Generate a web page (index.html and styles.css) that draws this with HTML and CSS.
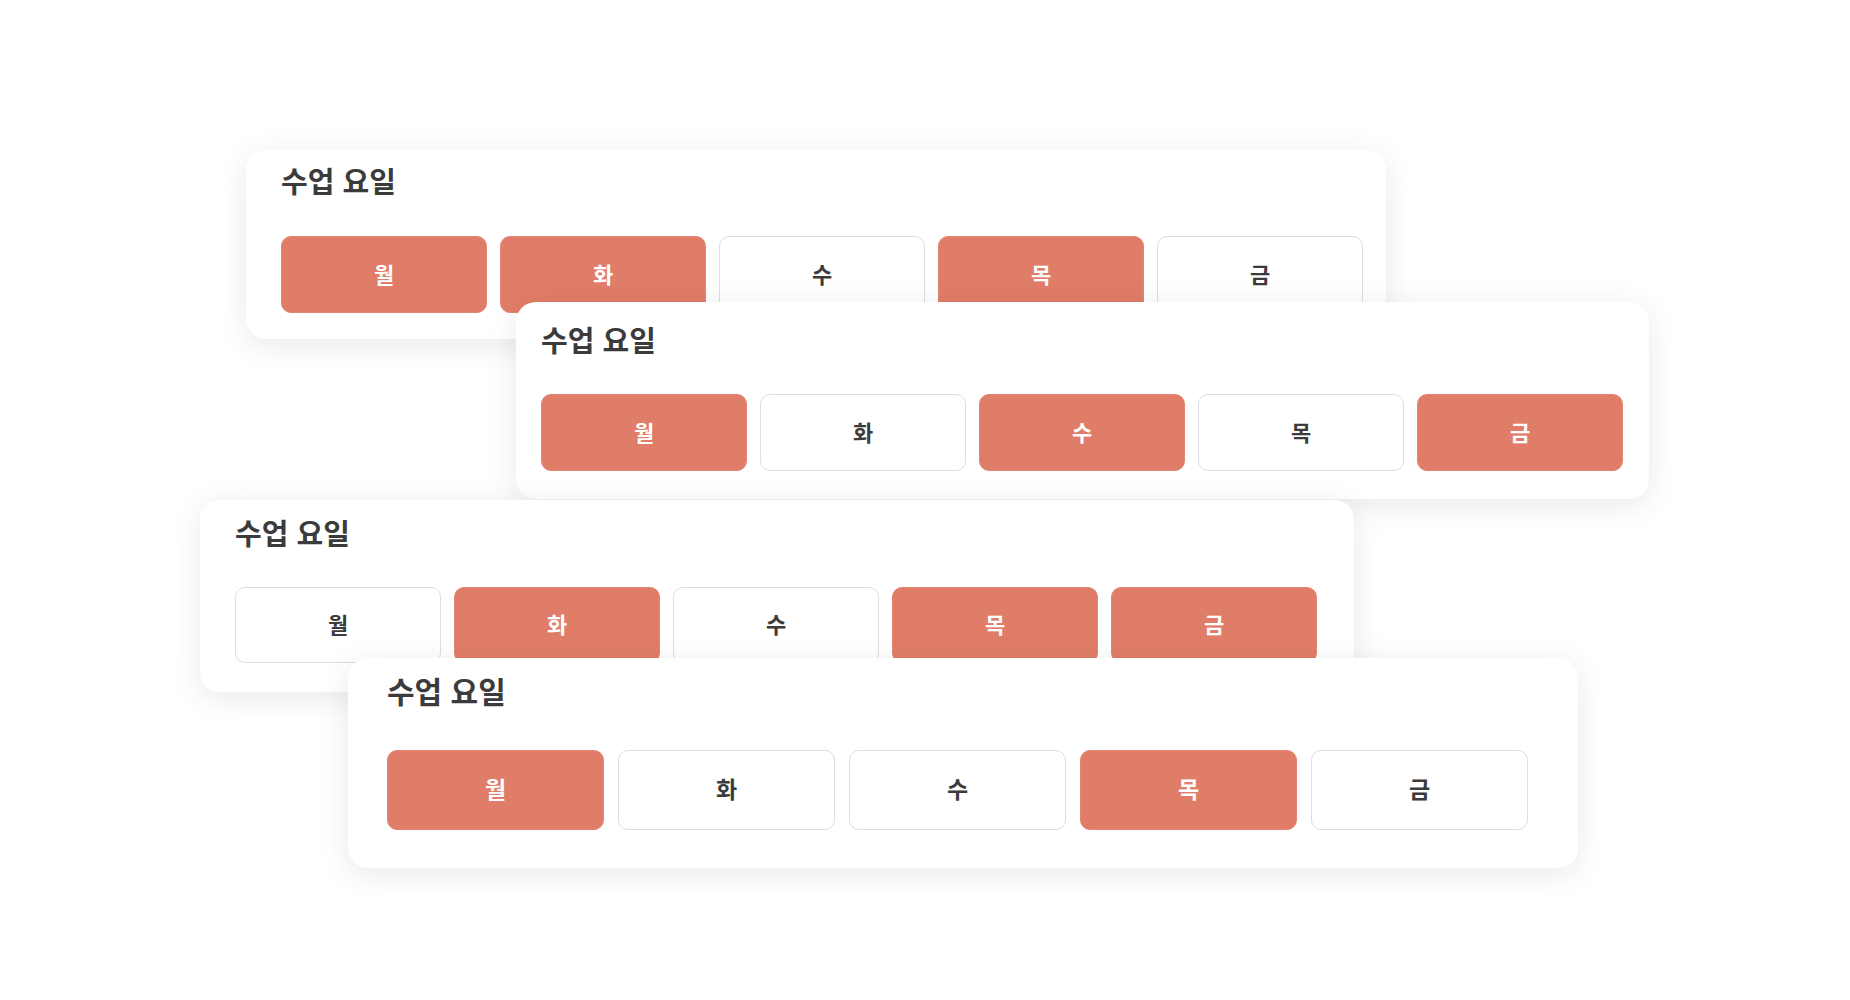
FILE: index.html
```html
<!DOCTYPE html>
<html lang="ko">
<head>
<meta charset="utf-8">
<title>수업 요일</title>
<link rel="stylesheet" href="styles.css">
</head>
<body>
<div class="stack">
  <section class="card card-a">
    <h2 class="title">수업 요일</h2>
    <div class="days">
      <button class="day on">월</button>
      <button class="day on">화</button>
      <button class="day">수</button>
      <button class="day on">목</button>
      <button class="day">금</button>
    </div>
  </section>
  <section class="card card-b">
    <h2 class="title">수업 요일</h2>
    <div class="days">
      <button class="day on">월</button>
      <button class="day">화</button>
      <button class="day on">수</button>
      <button class="day">목</button>
      <button class="day on">금</button>
    </div>
  </section>
  <section class="card card-c">
    <h2 class="title">수업 요일</h2>
    <div class="days">
      <button class="day">월</button>
      <button class="day on">화</button>
      <button class="day">수</button>
      <button class="day on">목</button>
      <button class="day on">금</button>
    </div>
  </section>
  <section class="card card-d">
    <h2 class="title">수업 요일</h2>
    <div class="days">
      <button class="day on">월</button>
      <button class="day">화</button>
      <button class="day">수</button>
      <button class="day on">목</button>
      <button class="day">금</button>
    </div>
  </section>
</div>
</body>
</html>
```

FILE: styles.css
```css
* { box-sizing: border-box; }
html, body {
  margin: 0;
  background: #ffffff;
  font-family: "Noto Sans CJK KR", "Noto Sans", sans-serif;
  color: #3b3b3b;
}
.stack {
  display: flex;
  flex-direction: column;
  align-items: flex-start;
  padding-top: 150px;
  padding-bottom: 132px;
  min-height: 1000px;
}
.card {
  position: relative;
  background: #ffffff;
  border-radius: 20px;
  box-shadow: 0 6px 32px rgba(0, 0, 0, 0.09);
  padding: var(--pt) 0 var(--pb) var(--pl);
  margin-left: var(--left);
  width: var(--w);
}
.title {
  margin: 0;
  font-size: var(--tfs);
  line-height: var(--tlh);
  font-weight: 700;
  color: #3b3b3b;
}
.days {
  display: flex;
  gap: var(--bg);
  margin-top: var(--gap);
}
.day {
  width: var(--bw);
  height: var(--bh);
  border-radius: 10px;
  border: 1px solid #dddddd;
  background: #ffffff;
  font-family: inherit;
  font-size: var(--bfs);
  font-weight: 700;
  color: #3b3b3b;
  padding: 0 0 4px 0;
  display: flex;
  align-items: center;
  justify-content: center;
}
.day.on {
  background: #e07d68;
  border-color: #e48571;
  color: #ffffff;
}
.card-a {
  --left: 246px; --w: 1140px; --pl: 35px; --pt: 11px; --pb: 26px;
  --tfs: 29px; --tlh: 38px; --gap: 37px;
  --bw: 206px; --bh: 77px; --bg: 13px; --bfs: 22px;
}
.card-b {
  --left: 516px; --w: 1133px; --pl: 25px; --pt: 18px; --pb: 28px;
  --tfs: 29px; --tlh: 38px; --gap: 36px;
  --bw: 206px; --bh: 77px; --bg: 13px; --bfs: 22px;
  margin-top: -37px;
}
.card-c {
  --left: 200px; --w: 1154px; --pl: 35px; --pt: 13px; --pb: 29px;
  --tfs: 29px; --tlh: 38px; --gap: 36px;
  --bw: 206px; --bh: 76px; --bg: 13px; --bfs: 22px;
  margin-top: 1px;
}
.card-d {
  --left: 348px; --w: 1230px; --pl: 39px; --pt: 13px; --pb: 38px;
  --tfs: 30px; --tlh: 39px; --gap: 40px;
  --bw: 217px; --bh: 80px; --bg: 14px; --bfs: 23px;
  margin-top: -34px;
}
```
